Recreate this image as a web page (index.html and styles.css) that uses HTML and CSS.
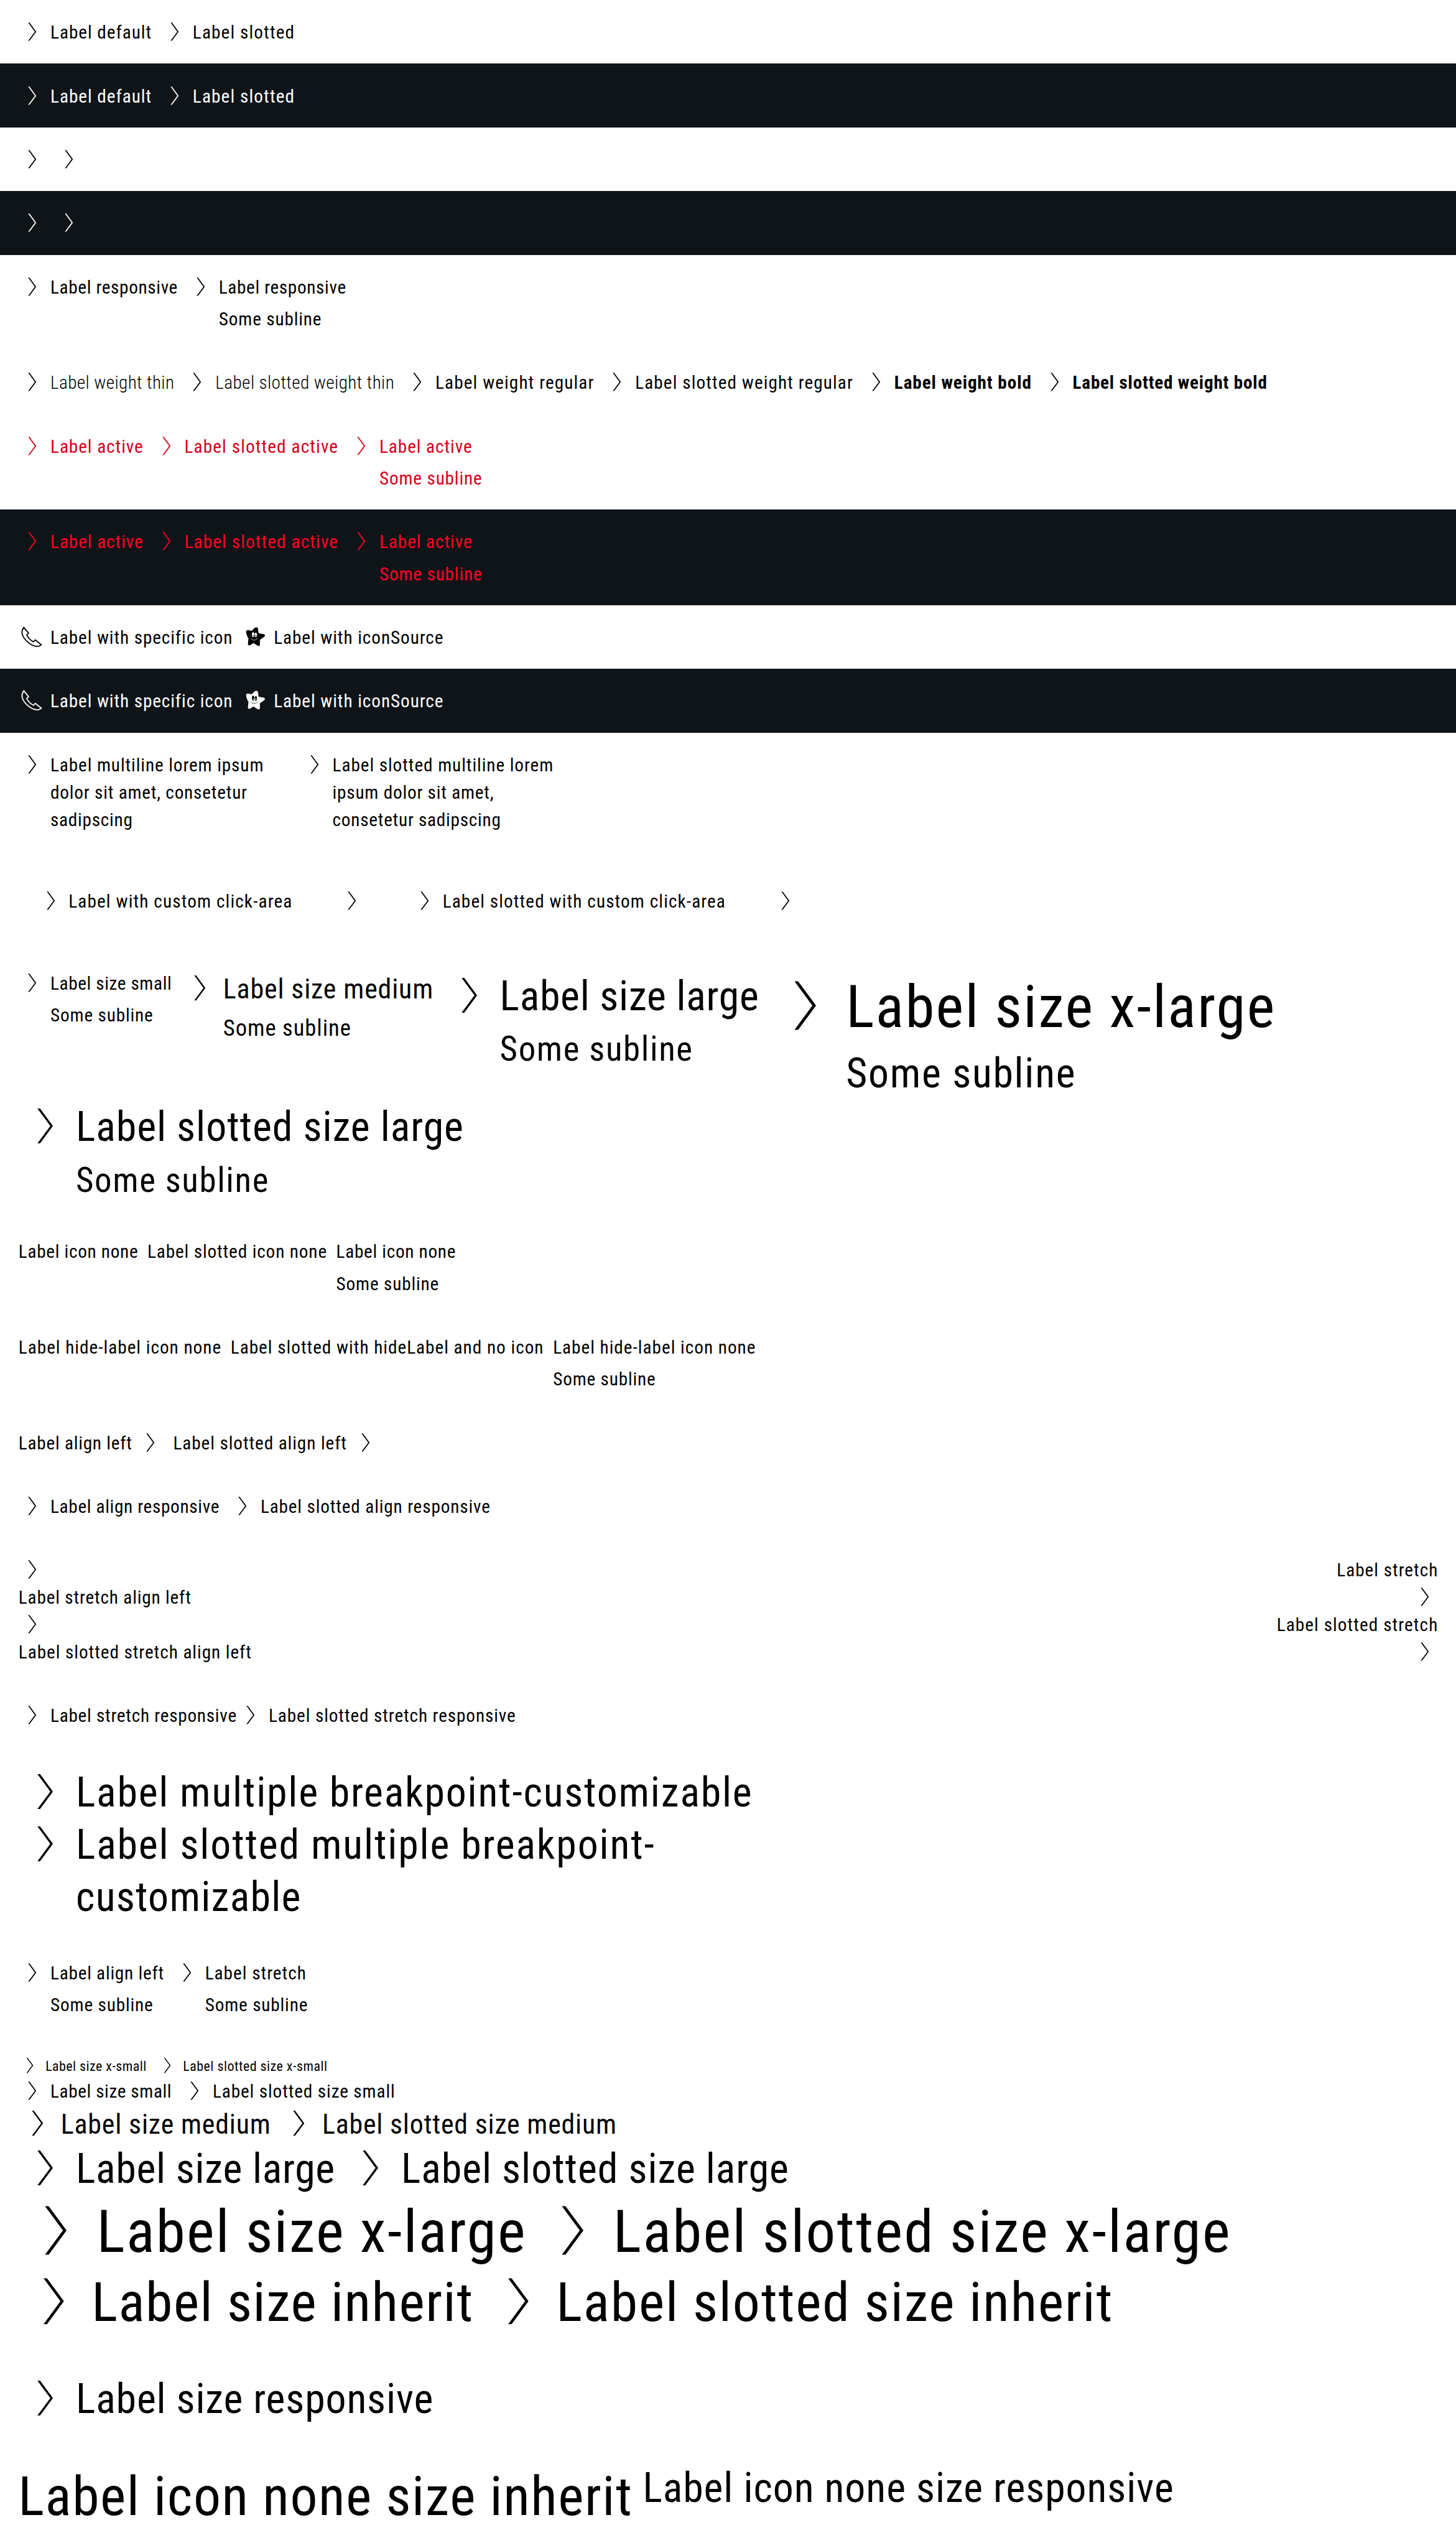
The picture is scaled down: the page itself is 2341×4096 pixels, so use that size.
FILE: index.html
```html
<!DOCTYPE html>
<html lang="en">
<head>
<meta charset="utf-8">
<title>Link pure</title>
<link rel="stylesheet" href="styles.css">
</head>
<body>
<svg class="sprite" aria-hidden="true">
  <symbol id="chevron" viewBox="0 0 24 24"><path fill="currentColor" d="M8.9 4h1.2L16 12l-5.9 8H8.9l5.9-8z"/></symbol>
  <symbol id="phone" viewBox="0 0 24 24"><path fill="none" stroke="currentColor" d="M5.1 3.6 9.3 8.7 7.6 10.2C8.9 12.7 11 15 13.5 16.3L15.2 14.6 20.4 18.8C19.2 20 17.8 20.4 16.2 20.3 10.2 19.3 3.9 13.2 3.5 8.2 3.5 6.4 4 4.8 5.1 3.6Z"/></symbol>
  <symbol id="star" viewBox="0 0 24 24">
    <path fill="currentColor" d="M11.6 4.1C12.6 3.3 14.4 3.4 14.6 4.6L15.2 8.8 19.8 9.6C21 9.9 21.1 11 20.2 11.8L16.3 14.6 16.4 18.6C16.3 20 15.1 20.2 14.1 19.5L10.7 17.3 7.8 19.2C6.7 19.7 5.7 19.2 5.8 18L6.3 13.3C5.1 11.5 4.3 9.3 4.2 7.3 4.2 6.2 5 5.9 6 6L9.2 6.6Z"/>
    <ellipse class="star-eye" cx="10.4" cy="10" rx="1.1" ry="2.2"/>
    <ellipse class="star-eye" cx="12.8" cy="10.2" rx="1" ry="2"/>
    <circle fill="currentColor" cx="10.8" cy="10.7" r=".5"/>
    <circle fill="currentColor" cx="12.8" cy="10.9" r=".45"/>
    <path class="star-smile" d="M8.4 13.2C9.6 15.3 13 15.3 14.2 13.1"/>
  </symbol>
</svg>

<section class="row">
  <a class="link"><svg class="icon"><use href="#chevron"/></svg><span class="label" style="letter-spacing:.0329em">Label default</span></a>
  <a class="link"><svg class="icon"><use href="#chevron"/></svg><span class="label" style="letter-spacing:.0381em">Label slotted</span></a>
</section>
<section class="row dark">
  <a class="link"><svg class="icon"><use href="#chevron"/></svg><span class="label" style="letter-spacing:.0329em">Label default</span></a>
  <a class="link"><svg class="icon"><use href="#chevron"/></svg><span class="label" style="letter-spacing:.0381em">Label slotted</span></a>
</section>
<section class="row">
  <a class="link"><svg class="icon"><use href="#chevron"/></svg></a>
  <a class="link"><svg class="icon"><use href="#chevron"/></svg></a>
</section>
<section class="row dark">
  <a class="link"><svg class="icon"><use href="#chevron"/></svg></a>
  <a class="link"><svg class="icon"><use href="#chevron"/></svg></a>
</section>
<section class="row">
  <a class="link"><svg class="icon"><use href="#chevron"/></svg><span class="label" style="letter-spacing:.0222em">Label responsive</span></a>
  <a class="link"><svg class="icon"><use href="#chevron"/></svg><span class="label"><span style="letter-spacing:.0222em">Label responsive</span><span class="sub" style="letter-spacing:.0285em">Some subline</span></span></a>
</section>
<section class="row">
  <a class="link"><svg class="icon"><use href="#chevron"/></svg><span class="label thin" style="letter-spacing:.0135em">Label weight thin</span></a>
  <a class="link"><svg class="icon"><use href="#chevron"/></svg><span class="label thin" style="letter-spacing:.0143em">Label slotted weight thin</span></a>
  <a class="link"><svg class="icon"><use href="#chevron"/></svg><span class="label" style="letter-spacing:.0375em">Label weight regular</span></a>
  <a class="link"><svg class="icon"><use href="#chevron"/></svg><span class="label" style="letter-spacing:.0370em">Label slotted weight regular</span></a>
  <a class="link"><svg class="icon"><use href="#chevron"/></svg><span class="label bold" style="letter-spacing:.0302em">Label weight bold</span></a>
  <a class="link"><svg class="icon"><use href="#chevron"/></svg><span class="label bold" style="letter-spacing:.0256em">Label slotted weight bold</span></a>
</section>
<section class="row active">
  <a class="link"><svg class="icon"><use href="#chevron"/></svg><span class="label" style="letter-spacing:.0320em">Label active</span></a>
  <a class="link"><svg class="icon"><use href="#chevron"/></svg><span class="label" style="letter-spacing:.0380em">Label slotted active</span></a>
  <a class="link"><svg class="icon"><use href="#chevron"/></svg><span class="label"><span style="letter-spacing:.0320em">Label active</span><span class="sub" style="letter-spacing:.0285em">Some subline</span></span></a>
</section>
<section class="row dark active">
  <a class="link"><svg class="icon"><use href="#chevron"/></svg><span class="label" style="letter-spacing:.0320em">Label active</span></a>
  <a class="link"><svg class="icon"><use href="#chevron"/></svg><span class="label" style="letter-spacing:.0380em">Label slotted active</span></a>
  <a class="link"><svg class="icon"><use href="#chevron"/></svg><span class="label"><span style="letter-spacing:.0320em">Label active</span><span class="sub" style="letter-spacing:.0285em">Some subline</span></span></a>
</section>
<section class="row">
  <a class="link"><svg class="icon"><use href="#phone"/></svg><span class="label" style="letter-spacing:.0308em">Label with specific icon</span></a>
  <a class="link"><svg class="icon"><use href="#star"/></svg><span class="label" style="letter-spacing:.0320em">Label with iconSource</span></a>
</section>
<section class="row dark">
  <a class="link"><svg class="icon"><use href="#phone"/></svg><span class="label" style="letter-spacing:.0308em">Label with specific icon</span></a>
  <a class="link"><svg class="icon"><use href="#star"/></svg><span class="label" style="letter-spacing:.0320em">Label with iconSource</span></a>
</section>
<section class="row">
  <a class="link multiline"><svg class="icon"><use href="#chevron"/></svg><span class="label"><span style="letter-spacing:.0309em">Label multiline lorem ipsum</span> <span style="letter-spacing:.0273em">dolor sit amet, consetetur</span> <span style="letter-spacing:.0252em">sadipscing</span></span></a>
  <a class="link multiline"><svg class="icon"><use href="#chevron"/></svg><span class="label"><span style="letter-spacing:.0319em">Label slotted multiline lorem</span> <span style="letter-spacing:.0268em">ipsum dolor sit amet,</span> <span style="letter-spacing:.0255em">consetetur sadipscing</span></span></a>
</section>
<section class="row">
  <a class="link click-area"><svg class="icon"><use href="#chevron"/></svg><span class="label" style="letter-spacing:.0383em">Label with custom click-area</span></a>
  <a class="link click-area"><svg class="icon"><use href="#chevron"/></svg></a>
  <a class="link click-area"><svg class="icon"><use href="#chevron"/></svg><span class="label" style="letter-spacing:.0375em">Label slotted with custom click-area</span></a>
  <a class="link click-area"><svg class="icon"><use href="#chevron"/></svg></a>
</section>
<section class="row wrap">
  <a class="link"><svg class="icon"><use href="#chevron"/></svg><span class="label"><span style="letter-spacing:.0211em">Label size small</span><span class="sub" style="letter-spacing:.0285em">Some subline</span></span></a>
  <a class="link medium"><svg class="icon"><use href="#chevron"/></svg><span class="label"><span style="letter-spacing:.0197em">Label size medium</span><span class="sub" style="letter-spacing:.0265em">Some subline</span></span></a>
  <a class="link large"><svg class="icon"><use href="#chevron"/></svg><span class="label"><span style="letter-spacing:.0111em">Label size large</span><span class="sub" style="letter-spacing:.0295em">Some subline</span></span></a>
  <a class="link x-large"><svg class="icon"><use href="#chevron"/></svg><span class="label"><span style="letter-spacing:.0237em">Label size x-large</span><span class="sub" style="letter-spacing:.0255em">Some subline</span></span></a>
  <a class="link large"><svg class="icon"><use href="#chevron"/></svg><span class="label"><span style="letter-spacing:.0145em">Label slotted size large</span><span class="sub" style="letter-spacing:.0295em">Some subline</span></span></a>
</section>
<section class="row">
  <a class="link"><span class="label" style="letter-spacing:.0240em">Label icon none</span></a>
  <a class="link"><span class="label" style="letter-spacing:.0297em">Label slotted icon none</span></a>
  <a class="link"><span class="label"><span style="letter-spacing:.0240em">Label icon none</span><span class="sub" style="letter-spacing:.0285em">Some subline</span></span></a>
</section>
<section class="row">
  <a class="link"><span class="label" style="letter-spacing:.0338em">Label hide-label icon none</span></a>
  <a class="link"><span class="label" style="letter-spacing:.0337em">Label slotted with hideLabel and no icon</span></a>
  <a class="link"><span class="label"><span style="letter-spacing:.0338em">Label hide-label icon none</span><span class="sub" style="letter-spacing:.0285em">Some subline</span></span></a>
</section>
<section class="row">
  <a class="link"><span class="label" style="letter-spacing:.0262em">Label align left</span><svg class="icon"><use href="#chevron"/></svg></a>
  <a class="link"><span class="label" style="letter-spacing:.0311em">Label slotted align left</span><svg class="icon"><use href="#chevron"/></svg></a>
</section>
<section class="row">
  <a class="link"><svg class="icon"><use href="#chevron"/></svg><span class="label" style="letter-spacing:.0229em">Label align responsive</span></a>
  <a class="link"><svg class="icon"><use href="#chevron"/></svg><span class="label" style="letter-spacing:.0291em">Label slotted align responsive</span></a>
</section>
<section class="row stack">
  <a class="link stretch"><svg class="icon"><use href="#chevron"/></svg><span class="label" style="letter-spacing:.0341em">Label stretch</span></a>
  <a class="link stretch"><span class="label" style="letter-spacing:.0284em">Label stretch align left</span><svg class="icon"><use href="#chevron"/></svg></a>
  <a class="link stretch"><svg class="icon"><use href="#chevron"/></svg><span class="label" style="letter-spacing:.0366em">Label slotted stretch</span></a>
  <a class="link stretch"><span class="label" style="letter-spacing:.0322em">Label slotted stretch align left</span><svg class="icon"><use href="#chevron"/></svg></a>
</section>
<section class="row flush">
  <a class="link"><svg class="icon"><use href="#chevron"/></svg><span class="label" style="letter-spacing:.0255em">Label stretch responsive</span></a>
  <a class="link"><svg class="icon"><use href="#chevron"/></svg><span class="label" style="letter-spacing:.0307em">Label slotted stretch responsive</span></a>
</section>
<section class="row stack">
  <a class="link large"><svg class="icon"><use href="#chevron"/></svg><span class="label" style="letter-spacing:.0270em">Label multiple breakpoint-customizable</span></a>
  <a class="link large"><svg class="icon"><use href="#chevron"/></svg><span class="label"><span style="letter-spacing:.0280em">Label slotted multiple breakpoint-</span><br><span style="letter-spacing:.0190em">customizable</span></span></a>
</section>
<section class="row">
  <a class="link"><svg class="icon"><use href="#chevron"/></svg><span class="label"><span style="letter-spacing:.0262em">Label align left</span><span class="sub" style="letter-spacing:.0285em">Some subline</span></span></a>
  <a class="link"><svg class="icon"><use href="#chevron"/></svg><span class="label"><span style="letter-spacing:.0341em">Label stretch</span><span class="sub" style="letter-spacing:.0285em">Some subline</span></span></a>
</section>
<section class="row stack">
  <div class="line">
    <a class="link x-small"><svg class="icon"><use href="#chevron"/></svg><span class="label" style="letter-spacing:.0217em">Label size x-small</span></a>
    <a class="link x-small"><svg class="icon"><use href="#chevron"/></svg><span class="label" style="letter-spacing:.0225em">Label slotted size x-small</span></a>
  </div>
  <div class="line">
    <a class="link"><svg class="icon"><use href="#chevron"/></svg><span class="label" style="letter-spacing:.0208em">Label size small</span></a>
    <a class="link"><svg class="icon"><use href="#chevron"/></svg><span class="label" style="letter-spacing:.0303em">Label slotted size small</span></a>
  </div>
  <div class="line">
    <a class="link medium"><svg class="icon"><use href="#chevron"/></svg><span class="label" style="letter-spacing:.0193em">Label size medium</span></a>
    <a class="link medium"><svg class="icon"><use href="#chevron"/></svg><span class="label" style="letter-spacing:.0180em">Label slotted size medium</span></a>
  </div>
  <div class="line">
    <a class="link large"><svg class="icon"><use href="#chevron"/></svg><span class="label" style="letter-spacing:.0111em">Label size large</span></a>
    <a class="link large"><svg class="icon"><use href="#chevron"/></svg><span class="label" style="letter-spacing:.0145em">Label slotted size large</span></a>
  </div>
  <div class="line">
    <a class="link x-large"><svg class="icon"><use href="#chevron"/></svg><span class="label" style="letter-spacing:.0237em">Label size x-large</span></a>
    <a class="link x-large"><svg class="icon"><use href="#chevron"/></svg><span class="label" style="letter-spacing:.0245em">Label slotted size x-large</span></a>
  </div>
  <div class="line">
    <a class="link inherit"><svg class="icon"><use href="#chevron"/></svg><span class="label" style="letter-spacing:.0175em">Label size inherit</span></a>
    <a class="link inherit"><svg class="icon"><use href="#chevron"/></svg><span class="label" style="letter-spacing:.0212em">Label slotted size inherit</span></a>
  </div>
</section>
<section class="row">
  <a class="link large"><svg class="icon"><use href="#chevron"/></svg><span class="label" style="letter-spacing:.0130em">Label size responsive</span></a>
</section>
<section class="row">
  <a class="link inherit"><span class="label" style="letter-spacing:.0178em">Label icon none size inherit</span></a>
  <a class="link large"><span class="label" style="letter-spacing:.0140em">Label icon none size responsive</span></a>
</section>
</body>
</html>
```
FILE: styles.css
```css
html {
  font-size: 14.6313px;
}

body {
  margin: 0;
  background: #fff;
  font-family: Roboto, "Liberation Sans", sans-serif;
  font-stretch: 75%;
  overflow-x: hidden;
}

.sprite {
  display: none;
}

.row {
  --surface: #fff;
  --active: #d5001c;
  display: flex;
  align-items: flex-start;
  gap: 1rem;
  padding: 2rem;
  background: var(--surface);
  color: #000;
}

.dark {
  --surface: #0e1418;
  --active: #ff0223;
  color: #fff;
}

.active {
  color: var(--active);
}

.stack {
  flex-direction: column;
  align-items: stretch;
  gap: 0;
}

.wrap {
  flex-wrap: wrap;
  row-gap: .125rem;
}

.flush {
  gap: 0;
}

.line {
  display: flex;
  gap: 1rem;
}

/* Link: an icon as tall as the line, then the label */
.link {
  --line: 3rem;
  --sub-size: 2rem;
  --sub-line: 3rem;
  --nudge: .02em;
  display: flex;
  align-items: flex-start;
  gap: .5rem;
  font-size: 2rem;
  line-height: var(--line);
  white-space: nowrap;
}

.icon {
  flex: none;
  width: var(--line);
  height: var(--line);
}

.label {
  transform: translate(var(--nudge), 1.5px);
}

.sub {
  display: block;
  margin-top: .5rem;
  font-size: var(--sub-size);
  line-height: var(--sub-line);
}

.x-small {
  --line: 2.5rem;
  --nudge: 0;
  font-size: 1.5rem;
}

.medium {
  --line: 4.125rem;
  --sub-size: 2.5rem;
  --sub-line: 3.375rem;
  font-size: 3rem;
}

.large {
  --line: 5.75rem;
  --sub-size: 3.75rem;
  --sub-line: 4.875rem;
  font-size: 4.5rem;
}

.x-large {
  --line: 8rem;
  --sub-size: 4.5rem;
  --sub-line: 5.75rem;
  font-size: 6.5rem;
}

.inherit {
  --line: 7.5625rem;
  --nudge: 0;
  font-size: 6rem;
}

.thin {
  font-weight: 300;
}

.bold {
  font-weight: 700;
}

.multiline {
  width: 30rem;
  white-space: normal;
}

.click-area {
  padding: 2rem;
}

.stretch {
  justify-content: space-between;
}

.star-eye {
  fill: var(--surface);
}

.star-smile {
  fill: none;
  stroke: var(--surface);
  stroke-width: .4;
}
```
